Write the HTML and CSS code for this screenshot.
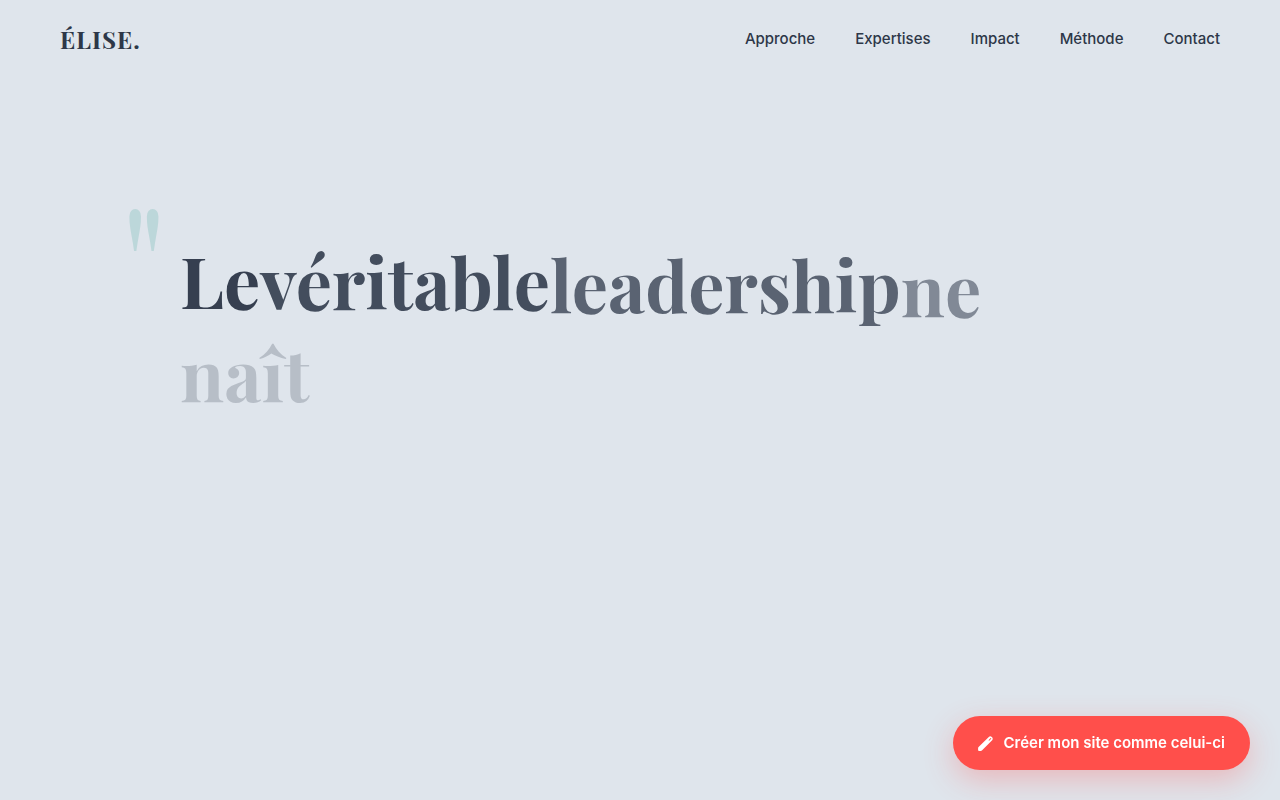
FILE: index.html
```html
<!DOCTYPE html>
<html lang="fr">
<head>
<meta charset="utf-8">
<meta name="viewport" content="width=device-width, initial-scale=1">
<title>Élise.</title>
<link rel="stylesheet" href="styles.css">
</head>
<body>
<header class="site-header">
  <a class="logo" href="#top">ÉLISE.</a>
  <nav class="nav">
    <a href="#approche">Approche</a>
    <a href="#expertises">Expertises</a>
    <a href="#impact">Impact</a>
    <a href="#methode">Méthode</a>
    <a href="#contact">Contact</a>
  </nav>
</header>
<main class="hero" id="top">
  <div class="quote">
    <span class="quote-mark" aria-hidden="true">"</span>
    <h1 class="quote-text"><span class="word step-1">Le</span><span class="word step-2">véritable</span><span class="word step-3">leadership</span><span class="word step-4">ne</span><wbr><span class="word step-5">naît</span></h1>
  </div>
</main>
<a class="cta" href="#creer">
  <svg class="cta-icon" viewBox="0 0 16 16" aria-hidden="true">
    <path fill="currentColor" fill-rule="evenodd" d="M.6 11.8 11.5 1Q13 -.3 14.7 1 16.5 2.6 15.1 4.5L4.4 15.3Q3.8 15.9 2.8 15.9H1.2Q.1 15.9.1 14.8V13Q.1 12.3.6 11.8ZM11.2 4.4 11.9 5.1 14.1 3Q14.3 2.6 14 2.3 13.6 2 13.2 2.4Z"/>
  </svg>
  <span>Créer mon site comme celui-ci</span>
</a>
</body>
</html>
```
FILE: styles.css
```css
* {
  box-sizing: border-box;
}

body {
  margin: 0;
  min-height: 100vh;
  background: #dfe5ec;
  color: #2d3748;
  font-family: Inter, "Liberation Sans", sans-serif;
}

a {
  color: inherit;
  text-decoration: none;
}

.site-header {
  display: flex;
  align-items: center;
  justify-content: space-between;
  padding: 24px 60px;
}

.logo {
  font: 700 24px/30px "Playfair Display", "Liberation Serif", serif;
  letter-spacing: 1px;
}

.nav {
  display: flex;
  gap: 40px;
  font-size: 15px;
  font-weight: 500;
  line-height: 30px;
}

.hero {
  padding: 158px 140px 0;
}

.quote {
  position: relative;
  max-width: 1000px;
  margin: 0 auto;
  padding: 0 40px;
}

.quote-mark {
  position: absolute;
  top: -56px;
  left: -20px;
  color: #81bfbb;
  font: 400 160px/160px "Playfair Display", "Liberation Serif", serif;
  opacity: 0.36;
}

.quote-text {
  max-width: 900px;
  margin: 0;
  font: 700 72px/86px "Playfair Display", "Liberation Serif", serif;
}

.word {
  display: inline-block;
}

.step-1 {
  opacity: 0.95;
}

.step-2 {
  opacity: 0.87;
  transform: translateY(1px);
}

.step-3 {
  opacity: 0.74;
  transform: translateY(4px);
}

.step-4 {
  opacity: 0.52;
  transform: translateY(8px);
}

.step-5 {
  opacity: 0.22;
  transform: translateY(7px);
}

.cta {
  position: fixed;
  right: 30px;
  bottom: 30px;
  display: flex;
  align-items: center;
  gap: 10px;
  padding: 16px 25px;
  border-radius: 50px;
  background: #ff4f4b;
  box-shadow: 0 10px 30px rgba(255, 79, 75, 0.3);
  color: #fff;
  font-size: 15px;
  font-weight: 600;
  line-height: 22px;
}

.cta-icon {
  width: 15px;
  height: 15px;
}
```
